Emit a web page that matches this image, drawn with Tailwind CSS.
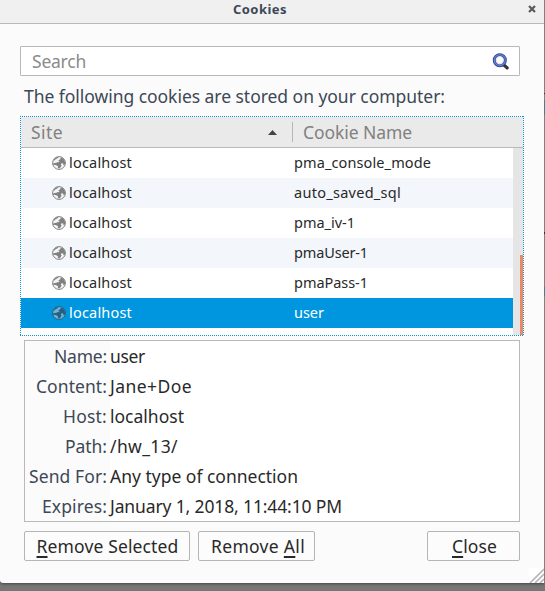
<!DOCTYPE html>
<html lang="en">
<head>
<meta charset="utf-8">
<title>Cookies</title>
<script src="https://cdn.jsdelivr.net/npm/@tailwindcss/browser@4"></script>
</head>
<body class="relative h-[591px] w-[545px] overflow-hidden bg-[#777777] font-['Noto_Sans',sans-serif] text-[17.5px] leading-[30px] whitespace-nowrap text-[#33383f]">
<svg class="hidden">
  <symbol id="globe" viewBox="0 0 14 14">
    <circle cx="7" cy="7" r="6.4" fill="var(--sea)" stroke="var(--land)" stroke-width="1"/>
    <path fill="var(--land)" d="M1.2 4.6 3 2.2 5.2 1 6.6 1.6 5.2 2.5 3.6 3.2 2.4 4.6ZM6.2 4.6 8.2 3.2 8.8 1.6 11 2.2 12.6 4.2 13.2 7 12.4 9.4 11.4 9 11.2 7.4 9.6 7.2 8.8 8.2 9.6 9.6 8.4 11.4 7.2 12.6 5.8 11.8 6 10.2 4.2 9.2 2.4 8.8 1.2 9.2 .8 7.8 2.6 7 4.6 6.8 5.6 6 7 6.2 7.4 5.2Z"/>
  </symbol>
</svg>
<div class="flex h-[583px] w-[544px] flex-col rounded-bl-[3px] bg-[#fbfbfb] shadow-[0_1px_3px_#444]">
  <header class="relative h-6 shrink-0 border-b border-[#b9b9b9] bg-[#f0f0f0]">
    <h1 class="pl-[233px] text-[13px] leading-[18px] font-bold text-[#3d4856]"><span data-w="54">Cookies</span></h1>
    <svg class="absolute top-[5px] left-[528px] size-2" viewBox="0 0 8 8"><path d="M1 1 7 7M7 1 1 7" stroke="#5a5a5a" stroke-width="2.2"/></svg>
  </header>

  <div class="mt-[22px] ml-5 flex h-[30px] w-[500px] shrink-0 items-center justify-between rounded-[1px] border border-[#b8b8b8] bg-white pr-2.5 pl-[11px] text-[#8b8b8b]">
    <span data-w="54">Search</span>
    <svg class="size-[17px]" viewBox="0 0 17 17"><path d="m11.8 11.8 3.3 3.1" stroke="#292929" stroke-width="3.2" stroke-linecap="round"/><path d="m13.3 13.7.8.8" stroke="#98917d" stroke-width="1"/><circle cx="7.8" cy="7.2" r="5.6" fill="#e5e5ea" stroke="#2b3c88" stroke-width="2.8"/><circle cx="7.8" cy="7.2" r="5.5" fill="none" stroke="#5f83d4" stroke-width="1.4"/><circle cx="7.8" cy="7" r="3" fill="#fff"/></svg>
  </div>

  <p class="mt-[5px] h-[35px] shrink-0 pl-6 text-[#3d4856]"><span data-w="421">The following cookies are stored on your computer:</span></p>

  <section class="relative ml-5 flex h-[220px] w-[504px] shrink-0 flex-col bg-white p-px">
    <div class="flex h-[31px] shrink-0 items-center border-b border-[#b9b9b9] bg-[#eaeaea] text-[#818181]">
      <div class="flex h-5 w-[272px] items-center border-r border-[#b5b5b5] pl-[10px]">
        <span data-w="32">Site</span>
        <svg class="mr-[15px] ml-auto h-[5px] w-[9px]" viewBox="0 0 9 5"><path d="M0 5 4.5 0 9 5Z" fill="#444"/></svg>
      </div>
      <div class="pl-[10px]"><span data-w="109">Cookie Name</span></div>
    </div>
    <div class="flex grow">
      <div class="w-[492px] text-[14.5px] leading-[28px] text-[#292929] [--land:#808080] [--sea:#f4f4f4]">
        <div class="flex h-[30px] items-center pl-[31px]"><svg class="mr-[3px] size-[14px]"><use href="#globe"/></svg><div class="h-[30px] w-[225px]"><span data-w="63">localhost</span></div><span class="h-[30px]" data-w="137">pma_console_mode</span></div>
        <div class="flex h-[30px] items-center bg-[#f3f6fb] pl-[31px]"><svg class="mr-[3px] size-[14px]"><use href="#globe"/></svg><div class="h-[30px] w-[225px]"><span data-w="63">localhost</span></div><span class="h-[30px]" data-w="107">auto_saved_sql</span></div>
        <div class="flex h-[30px] items-center pl-[31px]"><svg class="mr-[3px] size-[14px]"><use href="#globe"/></svg><div class="h-[30px] w-[225px]"><span data-w="63">localhost</span></div><span class="h-[30px]" data-w="61">pma_iv-1</span></div>
        <div class="flex h-[30px] items-center bg-[#f3f6fb] pl-[31px]"><svg class="mr-[3px] size-[14px]"><use href="#globe"/></svg><div class="h-[30px] w-[225px]"><span data-w="63">localhost</span></div><span class="h-[30px]" data-w="74">pmaUser-1</span></div>
        <div class="flex h-[30px] items-center pl-[31px]"><svg class="mr-[3px] size-[14px]"><use href="#globe"/></svg><div class="h-[30px] w-[225px]"><span data-w="63">localhost</span></div><span class="h-[30px]" data-w="74">pmaPass-1</span></div>
        <div class="flex h-[30px] items-center bg-[#0095df] pl-[31px] text-white [--land:#285f80] [--sea:#67b7dc]"><svg class="mr-[3px] size-[14px]"><use href="#globe"/></svg><div class="h-[30px] w-[225px]"><span data-w="63">localhost</span></div><span class="h-[30px]" data-w="30">user</span></div>
      </div>
      <div class="flex grow items-end justify-end bg-[#e5e5e5]"><div class="h-20 w-[3px] bg-[#ee8860]"></div></div>
    </div>
    <svg class="absolute inset-0 h-[220px] w-[504px]" fill="none" stroke="#0a93cf" stroke-dasharray="1 1" shape-rendering="crispEdges"><path d="M0 .5H504M0 219.5H504M.5 0V220M503.5 0V220"/></svg>
  </section>

  <section class="mt-1 ml-6 flex h-[182px] w-[496px] shrink-0 border border-[#b9b9b9] bg-white">
    <div class="flex w-[85px] flex-col items-end bg-[#fbfbfb] pr-[3px] text-[#3d4856]">
      <span data-w="53">Name:</span><span data-w="71">Content:</span><span data-w="44">Host:</span><span data-w="42">Path:</span><span data-w="78">Send For:</span><span data-w="65">Expires:</span>
    </div>
    <div class="flex flex-col items-start text-[#292929]">
      <span data-w="35">user</span><span data-w="82">Jane+Doe</span><span data-w="74">localhost</span><span data-w="68">/hw_13/</span><span data-w="188">Any type of connection</span><span data-w="232">January 1, 2018, 11:44:10 PM</span>
    </div>
  </section>

  <footer class="mt-[9px] ml-6 flex h-[30px] w-[496px] shrink-0 gap-2 text-[#292929]">
    <button class="flex w-[166px] items-center justify-center rounded-[2px] border border-[#b5b5b5] bg-[#fcfcfc] pl-px"><span data-w="142"><u class="decoration-2 underline-offset-[3px]">R</u>emove Selected</span></button>
    <button class="flex w-[117px] items-center justify-center rounded-[2px] border border-[#b5b5b5] bg-[#fcfcfc] pl-[3px]"><span data-w="94">Remove <u class="decoration-2 underline-offset-[3px]">A</u>ll</span></button>
    <button class="ml-auto flex w-[93px] items-center justify-center rounded-[2px] border border-[#b5b5b5] bg-[#fcfcfc] pl-0.5"><span data-w="45"><u class="decoration-2 underline-offset-[3px]">C</u>lose</span></button>
  </footer>
  <svg class="mt-[7px] ml-auto size-[15px] shrink-0 bg-white" viewBox="0 0 15 15"><path d="M1 15 15 1M6 15 15 6M11 15 15 11" stroke="#b5b5b5" stroke-width="1.6"/></svg>
</div>
<div class="absolute top-0 right-0 flex h-[583px] w-px flex-col bg-[#808080] pt-[93px]"><div class="h-px bg-[#333]"></div><div class="mt-[6px] h-[15px] bg-[#3e8294]"></div><div class="mt-[117px] h-[2px] bg-[#333]"></div><div class="mt-[53px] h-[9px] bg-[#3e8294]"></div></div>
<script>
// Give each label its nominal width by spacing its letters.
function fitLabels() {
  document.querySelectorAll('[data-w]').forEach(el => {
    el.style.letterSpacing = '0px';
    const n = el.textContent.length;
    const d = (Number(el.dataset.w) - el.getBoundingClientRect().width) / n;
    el.style.letterSpacing = d + 'px';
  });
}
window.addEventListener('load', () => {
  fitLabels();
  document.fonts.ready.then(fitLabels);
});
</script>
</body>
</html>
